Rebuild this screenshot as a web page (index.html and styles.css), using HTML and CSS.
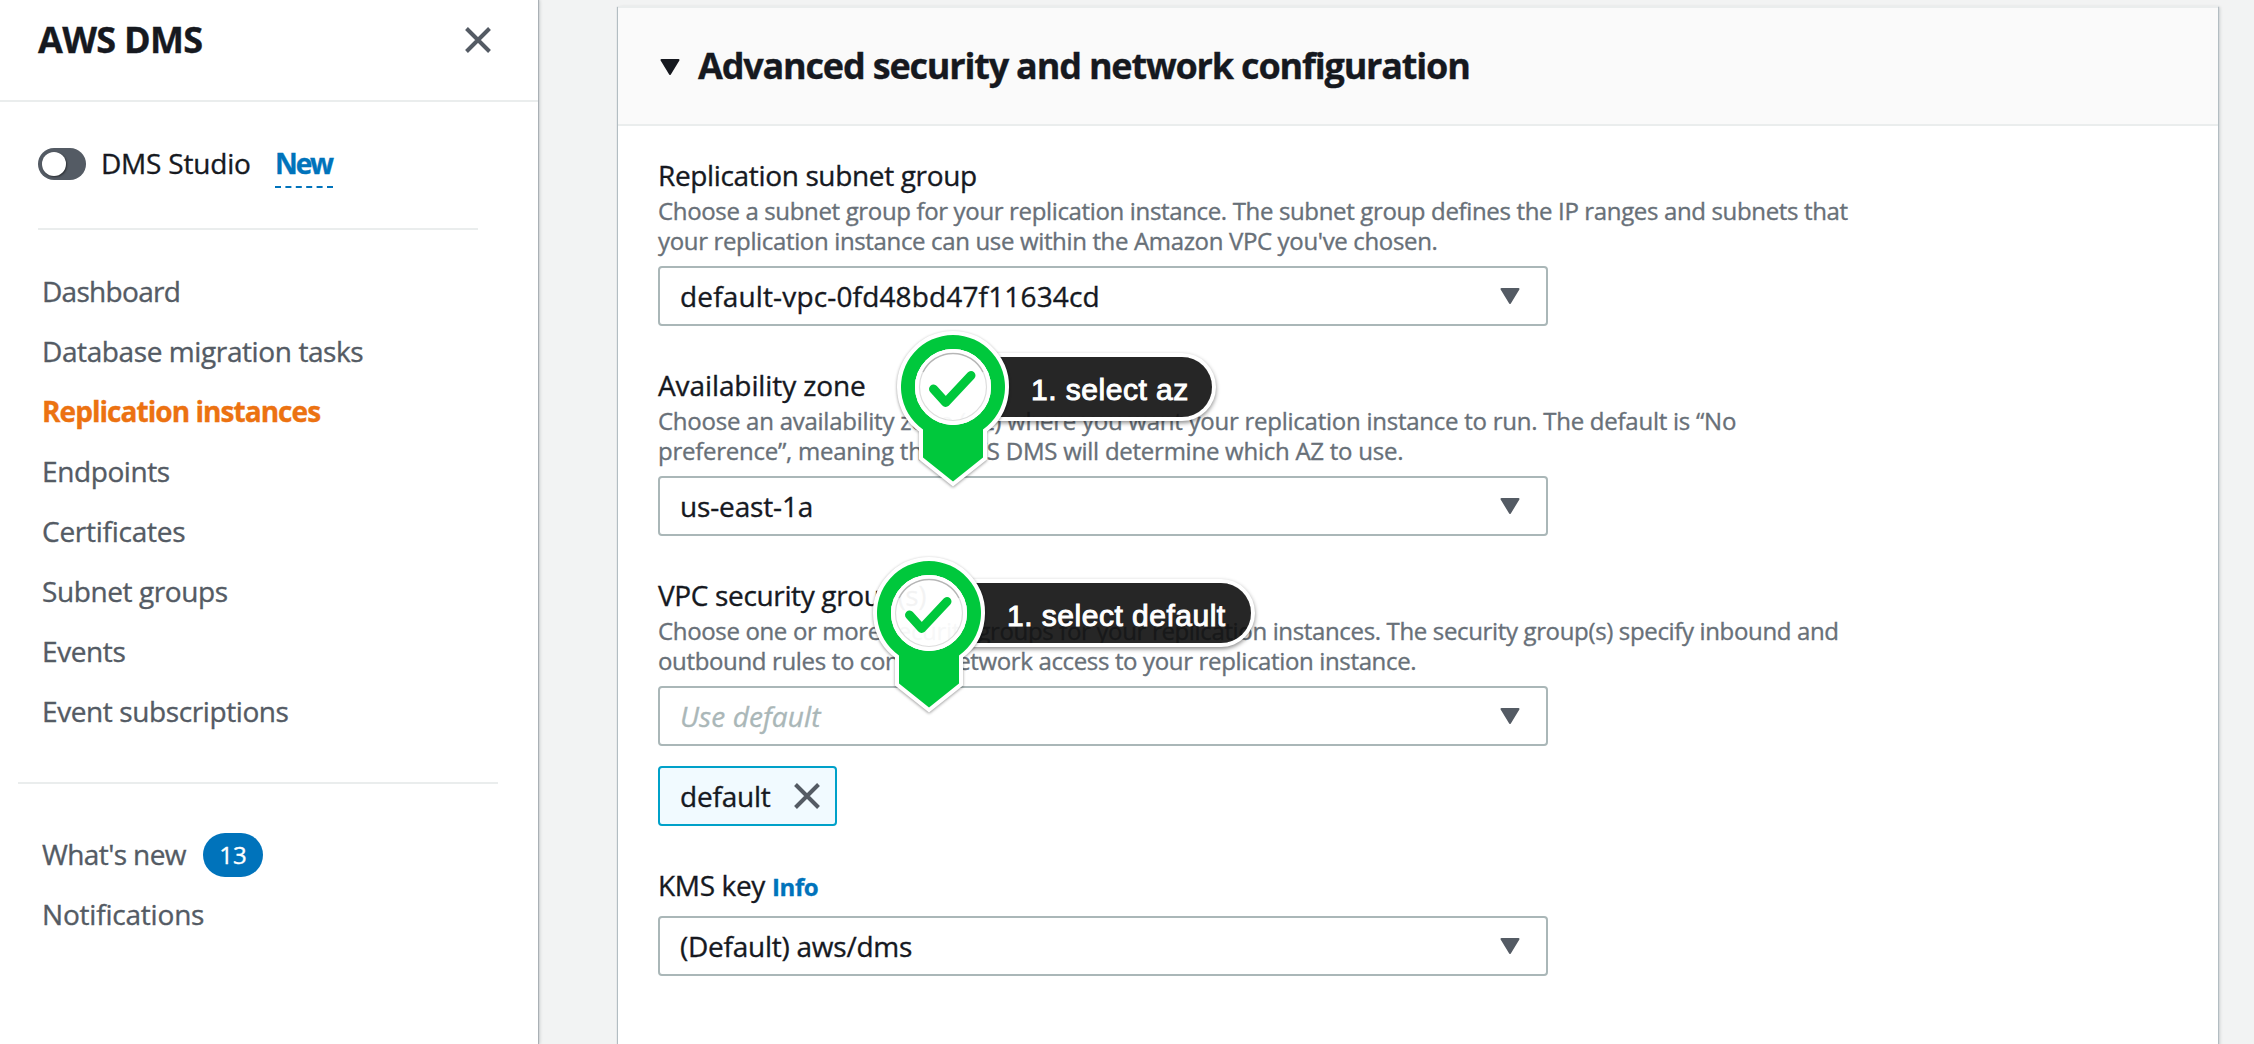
FILE: index.html
```html
<!DOCTYPE html>
<html lang="en">
<head>
<meta charset="utf-8">
<title>AWS DMS</title>
<link rel="stylesheet" href="styles.css">
</head>
<body>
<svg class="defs" width="0" height="0" aria-hidden="true">
  <symbol id="caret" viewBox="0 0 20 16"><path d="M1.5 1h17L10 15z" fill="currentColor" stroke="currentColor" stroke-width="2" stroke-linejoin="round"/></symbol>
  <symbol id="close" viewBox="0 0 26 26"><path d="M1.5 1.5l23 23M24.500 1.500l-23 23" fill="none" stroke="currentColor" stroke-width="4"/></symbol>
  <symbol id="pin" viewBox="-64 -64 128 176">
    <path class="pin-outline" d="M30 42.500V70.500L0 94.500L-30 70.500V42.500A52 52 0 1 1 30 42.500z" fill="none" stroke="#fff" stroke-width="8"/>
    <path fill-rule="evenodd" d="M30 42.500V70.500L0 94.500L-30 70.500V42.500A52 52 0 1 1 30 42.500zM0 -38A38 38 0 1 0 0 38A38 38 0 1 0 0 -38z" fill="#00c83c"/>
    <circle r="38" fill="#fff" fill-opacity=".95"/>
    <circle r="36" fill="none" stroke="#fff" stroke-width="4"/>
    <circle r="33.500" fill="none" stroke="#ddd" stroke-width="1.200"/>
    <path d="M-30 -15A33.500 33.500 0 0 1 30 -15" fill="none" stroke="#999" stroke-opacity=".6" stroke-width="1.500"/>
    <path d="M-19.500 2L-7.300 15.500L18 -11.500" fill="none" stroke="#00c83c" stroke-width="9" stroke-linecap="round" stroke-linejoin="round"/>
  </symbol>
</svg>
<div class="app">
  <aside class="sidebar">
    <header class="sidebar-header">
      <h2>AWS DMS</h2>
      <svg class="close"><use href="#close"/></svg>
    </header>
    <div class="studio">
      <span class="toggle"><span class="knob"></span></span>
      <span class="studio-label">DMS Studio</span>
      <a class="new">New</a>
    </div>
    <nav class="nav">
      <a class="dashboard">Dashboard</a>
      <a>Database migration tasks</a>
      <a class="active">Replication instances</a>
      <a>Endpoints</a>
      <a class="certificates">Certificates</a>
      <a>Subnet groups</a>
      <a>Events</a>
      <a>Event subscriptions</a>
    </nav>
    <nav class="nav nav-secondary">
      <a class="whats-new">What's new <span class="badge">13</span></a>
      <a class="notifications">Notifications</a>
    </nav>
  </aside>
  <main class="content">
    <section class="card">
      <header class="card-header">
        <svg class="caret"><use href="#caret"/></svg>
        <h1>Advanced security and network configuration</h1>
      </header>
      <div class="card-body">
        <div class="field">
          <div class="label">Replication subnet group</div>
          <p class="hint">Choose a subnet group for your replication instance. The subnet group defines the IP ranges and subnets that<br>your replication instance can use within the Amazon VPC you've chosen.</p>
          <div class="select"><span class="vpc-id">default-vpc-0fd48bd47f11634cd</span><svg class="caret"><use href="#caret"/></svg></div>
        </div>
        <div class="field">
          <div class="label label-zone">Availability zone</div>
          <p class="hint hint-zone">Choose an availability zone (AZ) where you want your replication instance to run. The default is “No<br>preference”, meaning that AWS DMS will determine which AZ to use.</p>
          <div class="select"><span class="zone">us-east-1a</span><svg class="caret"><use href="#caret"/></svg></div>
        </div>
        <div class="field">
          <div class="label">VPC security group(s)</div>
          <p class="hint">Choose one or more security groups for your replication instances. The security group(s) specify inbound and<br>outbound rules to control network access to your replication instance.</p>
          <div class="select"><span class="placeholder">Use default</span><svg class="caret"><use href="#caret"/></svg></div>
          <div class="token"><span>default</span><svg class="close"><use href="#close"/></svg></div>
        </div>
        <div class="field kms">
          <div class="label">KMS key <a class="info">Info</a></div>
          <div class="select"><span class="kms-value">(Default) aws/dms</span><svg class="caret"><use href="#caret"/></svg></div>
        </div>
      </div>
    </section>
  </main>
  <div class="marker marker-az"><div class="marker-label">1. select az</div><svg class="pin"><use href="#pin"/></svg></div>
  <div class="marker marker-default"><div class="marker-label">1. select default</div><svg class="pin"><use href="#pin"/></svg></div>
</div>
</body>
</html>
```
FILE: styles.css
```css
* { box-sizing: border-box; }
body {
  margin: 0;
  background: #f2f3f3;
  color: #16191f;
  font: 28px/36px "Open Sans", "Noto Sans", sans-serif;
  letter-spacing: -0.35px;
  -webkit-text-stroke: 0.35px currentColor;
}
h1, h2, p { margin: 0; }
.defs { position: absolute; }
.app {
  position: relative;
  display: flex;
  width: 2254px;
  height: 1044px;
  overflow: hidden;
}
.sidebar {
  flex: none;
  width: 538px;
  background: #fff;
  box-shadow: 1px 0 1px #aab0b5, 2px 0 3px rgba(0, 28, 36, .15);
}
.sidebar-header {
  display: flex;
  justify-content: space-between;
  align-items: flex-start;
  height: 102px;
  padding: 17px 47px 0 38px;
  border-bottom: 2px solid #eaeded;
}
h2 {
  margin-top: 1px;
  font-size: 36px;
  line-height: 44px;
  letter-spacing: -0.7px;
}
.close {
  width: 26px;
  height: 26px;
  color: #545b64;
}
.sidebar-header .close { margin-top: 10px; }
.studio {
  display: flex;
  align-items: flex-start;
  height: 128px;
  margin: 0 60px 0 38px;
  padding-top: 43px;
  border-bottom: 2px solid #eaeded;
}
.toggle {
  width: 48px;
  height: 32px;
  margin: 3px 15px 0 0;
  padding: 4px;
  border-radius: 16px;
  background: #545b64;
}
.knob {
  display: block;
  width: 24px;
  height: 24px;
  border-radius: 50%;
  background: #fff;
  box-shadow: 1px 1px 2px rgba(0, 0, 0, .5);
}
.studio-label {
  width: 174px;
  letter-spacing: -0.2px;
}
.new {
  width: 58px;
  height: 43px;
  color: #0073bb;
  font-weight: 700;
  letter-spacing: -2.1px;
  border-bottom: 2px dashed #0073bb;
}
.nav {
  display: flex;
  flex-direction: column;
  padding: 31px 0 41px 42px;
  color: #545b64;
  line-height: 60px;
  letter-spacing: -0.4px;
}
.nav .dashboard { letter-spacing: -0.7px; }
.nav .certificates { letter-spacing: -0.25px; }
.nav .notifications { letter-spacing: -0.2px; }
.nav .active {
  color: #ec7211;
  font-weight: 700;
  letter-spacing: -0.95px;
}
.nav-secondary {
  margin: 0 40px 0 18px;
  padding: 39px 0 0 24px;
  border-top: 2px solid #eaeded;
}
.whats-new {
  display: flex;
  align-items: center;
  gap: 17px;
  height: 61px;
  letter-spacing: -0.6px;
}
.badge {
  height: 44px;
  width: 60px;
  margin-top: 3px;
  text-align: center;
  border-radius: 22px;
  background: #0073bb;
  color: #fff;
  font-size: 24px;
  line-height: 44px;
  letter-spacing: 0;
}
.content { padding: 6px 0 0 80px; }
.card {
  width: 1600px;
  height: 1100px;
  background: #fff;
  border-top: 2px solid #eaeded;
  box-shadow: 0 1px 1px #aab7b8, 1px 1px 1px #b5bec4, -1px 1px 1px #b5bec4, 2px 1px 3px rgba(0, 28, 36, .15);
}
.card-header {
  display: flex;
  gap: 18px;
  height: 118px;
  padding: 36px 0 0 42px;
  background: #fafafa;
  border-bottom: 2px solid #eaeded;
}
h1 {
  font-size: 36px;
  line-height: 44px;
  letter-spacing: -1.19px;
}
.caret {
  flex: none;
  width: 20px;
  height: 16px;
  color: #545b64;
}
.card-header .caret {
  margin-top: 15px;
  color: #16191f;
}
.card-body {
  display: flex;
  flex-direction: column;
  gap: 41px;
  padding: 31px 40px 0;
}
.label {
  height: 36px;
  margin-bottom: 3px;
}
.label-zone { letter-spacing: -0.1px; }
.hint {
  margin-bottom: 10px;
  color: #687078;
  font-size: 24px;
  line-height: 30px;
  white-space: nowrap;
}
.hint-zone { letter-spacing: -0.25px; }
.select {
  display: flex;
  align-items: center;
  justify-content: space-between;
  width: 890px;
  height: 60px;
  padding: 0 26px 0 20px;
  border: 2px solid #aab7b8;
  border-radius: 4px;
  letter-spacing: 0.1px;
}
.select span, .token span { margin-bottom: 1px; }
.vpc-id { letter-spacing: 0.15px; }
.zone { letter-spacing: -0.15px; }
.placeholder {
  color: #aab7b8;
  font-style: italic;
}
.token {
  display: flex;
  align-items: center;
  justify-content: space-between;
  width: 179px;
  height: 60px;
  margin-top: 20px;
  padding: 0 15px 0 20px;
  border: 2px solid #00a1c9;
  border-radius: 4px;
  background: #f1faff;
  letter-spacing: -0.2px;
}
.kms .label { margin-bottom: 13px; }
.kms-value { letter-spacing: -0.25px; }
.info {
  color: #0073bb;
  font-size: 24px;
  line-height: 24px;
  font-weight: 700;
}
.marker {
  position: absolute;
  width: 128px;
  height: 176px;
}
.marker-az { left: 889px; top: 323px; }
.marker-default { left: 865px; top: 549px; }
.pin {
  position: absolute;
  inset: 0;
  width: 128px;
  height: 176px;
}
.pin-outline { filter: drop-shadow(0 1px 1.5px rgba(0, 0, 0, .4)); }
.marker-label {
  position: absolute;
  left: 106px;
  top: 34px;
  height: 60px;
  padding-left: 36px;
  border-radius: 0 30px 30px 0;
  background: rgba(14, 14, 14, .9);
  box-shadow: 0 0 0 4px #fff, 0 2px 4px 4px rgba(0, 0, 0, .45);
  color: #fff;
  font: 30px/65px "Liberation Sans", Arial, sans-serif;
  letter-spacing: 0.5px;
  white-space: nowrap;
  -webkit-text-stroke: 1px #fff;
}
.marker-az .marker-label { width: 217px; }
.marker-default .marker-label { width: 280px; }
```
